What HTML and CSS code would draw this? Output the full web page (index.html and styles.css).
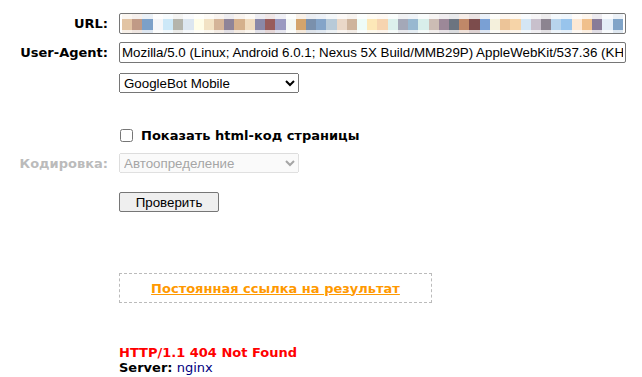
FILE: index.html
```html
<!DOCTYPE html>
<html lang="ru">
<head>
  <meta charset="UTF-8">
  <title>Проверка ответа сервера</title>
  <link rel="stylesheet" href="styles.css">
</head>
<body>
  <form class="check-form">
    <div class="row row-url">
      <label class="label">URL:</label>
      <div class="url-box" id="urlBox"></div>
    </div>
    <div class="row row-ua">
      <label class="label" for="ua">User-Agent:</label>
      <input type="text" id="ua" class="text-input" value="Mozilla/5.0 (Linux; Android 6.0.1; Nexus 5X Build/MMB29P) AppleWebKit/537.36 (KHTML, like Gecko) Chrome/41.0.2272.96 Mobile Safari/537.36 (compatible; Googlebot/2.1; +http://www.google.com/bot.html)">
    </div>
    <div class="row row-bot">
      <span class="label"></span>
      <select class="bot-select">
        <option>GoogleBot Mobile</option>
        <option>GoogleBot</option>
        <option>YandexBot</option>
      </select>
    </div>
    <div class="row row-check">
      <span class="label"></span>
      <label class="check-label"><input type="checkbox" class="check"> Показать html-код страницы</label>
    </div>
    <div class="row row-enc">
      <label class="label label-off">Кодировка:</label>
      <select class="enc-select" disabled>
        <option>Автоопределение</option>
      </select>
    </div>
    <div class="row row-btn">
      <span class="label"></span>
      <button type="button" class="btn">Проверить</button>
    </div>
    <div class="row row-link">
      <span class="label"></span>
      <div class="permalink"><a href="#">Постоянная ссылка на результат</a></div>
    </div>
  </form>

  <div class="result">
    <div class="status">HTTP/1.1 404 Not Found</div>
    <div class="header-line"><b>Server:</b> <span class="val">nginx</span></div>
  </div>

  <script>
    // pixelated url (blurred on purpose)
    const blocks = ['#e2c4a4','#c09a86','#7ca0c8','#f5f6f8','#cce8f8','#b4b4ac','#dce6f0','#fffde8','#f2e2c4','#d4b498','#8e8498','#d4b08c','#f0dcc0','#8a88a8','#985c5c','#9a9ac0','#f4f8f4',
      '#d4a46c','#7a90ac','#84a4c8','#b8cad8','#ead8c8','#ceb49c','#eefcf8','#fde8b8','#f6d4b0','#dcf0ec','#a4a8b8','#98b8d0','#d8eeea','#ccbcb4','#9c8898','#6c7480',
      '#c08868','#7c4c4c','#7aa0d4','#f4f0dc','#ecc498','#f6d4a8','#d4e6f4','#c8c0cc','#8c8490','#b8d4ec','#98c4ec','#fce8d4','#f0c08c','#887c98','#e4eef8','#80a4c8'];
    const box = document.getElementById('urlBox');
    for (const c of blocks) {
      const s = document.createElement('span');
      s.className = 'px';
      s.style.backgroundColor = c;
      box.appendChild(s);
    }
  </script>
</body>
</html>
```

FILE: styles.css
```css
body {
  margin: 8px;
  font-family: "DejaVu Sans", Verdana, sans-serif;
  font-size: 13px;
  color: #000;
  background: #fff;
}
.check-form {
  padding-top: 5px;
}
.row {
  display: flex;
  align-items: center;
}
.label {
  width: 100px;
  flex: none;
  text-align: right;
  font-weight: bold;
  margin-right: 11px;
}
.label-off {
  color: #bbb;
}
.row-ua { margin-top: 8px; }
.row-bot { margin-top: 10px; }
.row-check { margin-top: 32px; height: 20px; }
.row-enc { margin-top: 8px; }
.row-btn { margin-top: 19px; }
.row-link { margin-top: 61px; }

.url-box {
  width: 501px;
  height: 19px;
  border: 1px solid #767676;
  border-radius: 2px;
  padding: 0 2px;
  display: flex;
}
.px {
  flex: 1;
  background-image: linear-gradient(rgba(255,255,255,.85) 0 5px, transparent 5px 16px, rgba(255,255,255,.75) 16px);
}
.text-input {
  width: 501px;
  height: 17px;
  margin: 0;
  padding: 1px 2px;
  border: 1px solid #767676;
  border-radius: 2px;
  font-family: "Liberation Sans", Arial, sans-serif;
  font-size: 13.33px;
}
select {
  margin: 0;
  height: 20px;
  width: 180px;
  font-family: "Liberation Sans", Arial, sans-serif;
  font-size: 13.33px;
}
.check-label {
  font-weight: bold;
  display: flex;
  align-items: center;
}
.check {
  margin: 0 8px 0 1px;
  width: 13px;
  height: 13px;
}
.btn {
  width: 100px;
  height: 20px;
  margin: 0;
  font-family: "Liberation Sans", Arial, sans-serif;
  font-size: 13.33px;
  background: #efefef;
  border: 1px solid #767676;
  border-radius: 2px;
}
.permalink {
  width: 311px;
  height: 28px;
  border: 1px dashed #bbb;
  display: flex;
  align-items: center;
  justify-content: center;
  font-weight: bold;
}
.permalink a {
  color: #f90;
}
.result {
  margin-top: 42px;
  margin-left: 111px;
  line-height: 15px;
}
.status {
  color: #f00;
  font-weight: bold;
}
.val {
  color: #000080;
}
```
